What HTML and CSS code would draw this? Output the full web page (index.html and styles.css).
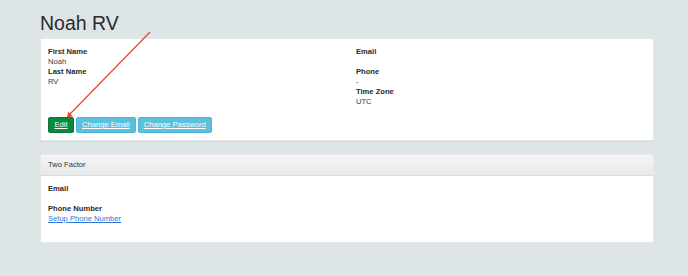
FILE: index.html
```html
<!DOCTYPE html>
<html>
<head>
    <meta charset="utf-8" />
    <title>Noah RV</title>
    <link rel="stylesheet" href="styles.css">
</head>

<body>
    <div class="page">
        <h1>Noah RV</h1>

        <div class="card">
            <div class="details">
                <div class="col">
                    <div class="label">First Name</div>
                    <div class="value">Noah</div>
                    <div class="label">Last Name</div>
                    <div class="value">RV</div>
                </div>
                <div class="col">
                    <div class="label">Email</div>
                    <div class="value">&nbsp;</div>
                    <div class="label">Phone</div>
                    <div class="value">-</div>
                    <div class="label">Time Zone</div>
                    <div class="value">UTC</div>
                </div>
            </div>

            <div class="actions">
                <a href="#" class="btn btn-edit">Edit</a>
                <a href="#" class="btn btn-info">Change Email</a>
                <a href="#" class="btn btn-info">Change Password</a>
            </div>
        </div>

        <div class="card card-panel">
            <div class="card-header">Two Factor</div>
            <div class="card-body">
                <div class="label">Email</div>
                <div class="value">&nbsp;</div>
                <div class="label">Phone Number</div>
                <div class="value"><a href="#" class="link">Setup Phone Number</a></div>
            </div>
        </div>
    </div>

    <!-- annotation arrow drawn over the page -->
    <svg class="arrow" width="688" height="276" viewBox="0 0 688 276">
        <line x1="150" y1="32" x2="70" y2="114" stroke="#f0432f" stroke-width="1.2" />
        <polygon points="67,117.5 68.2,111.6 72.9,116.2" fill="#f0432f" />
    </svg>
</body>
</html>
```

FILE: styles.css
```css
* {
    margin: 0px;
    padding: 0px;
    box-sizing: border-box;
}

body {
    background-color: #dde5e6;
    font-family: "Liberation Sans", Arial, sans-serif;
    color: #333;
    font-size: 7.6px;
    line-height: 10px;
}

.page {
    width: 614px;
    margin-left: 40px;
}

h1 {
    margin: 11px 0px 3px;
    font-size: 19.5px;
    line-height: 24px;
    font-weight: normal;
    color: #2b2b2b;
}

.card {
    background-color: #fff;
    border: 1px solid #e3e8e8;
    border-radius: 2px;
    box-shadow: 0px 1px 1px rgba(0, 0, 0, 0.06);
    padding: 8px 7px 7px;
}

.details {
    display: grid;
    grid-template-columns: 308px 1fr;
}

.label {
    font-weight: bold;
    color: #2a2a2a;
}

.value {
    color: #3a3a3a;
}

.actions {
    display: flex;
    gap: 2px;
    margin-top: 10px;
}

.btn {
    display: block;
    height: 16px;
    line-height: 14px;
    padding: 0px 5px;
    border-radius: 2px;
    color: #fff;
    font-size: 7.6px;
    text-decoration: underline;
}

.btn-edit {
    background-color: #0b8a3e;
    border: 1px solid #087534;
    width: 26px;
    text-align: center;
    padding: 0px;
}

.btn-info {
    background-color: #5bc0de;
    border: 1px solid #4fb5d4;
}

.card-panel {
    margin-top: 13px;
    padding: 0px;
}

.card-header {
    height: 21px;
    line-height: 20px;
    padding: 0px 7px;
    background: linear-gradient(#f5f5f5, #e8e8e8);
    border-bottom: 1px solid #dcdcdc;
    color: #333;
}

.card-body {
    padding: 8px 7px 18px;
}

.link {
    color: #2a76d8;
    text-decoration: underline;
}

.arrow {
    position: absolute;
    left: 0px;
    top: 0px;
    pointer-events: none;
}
```
